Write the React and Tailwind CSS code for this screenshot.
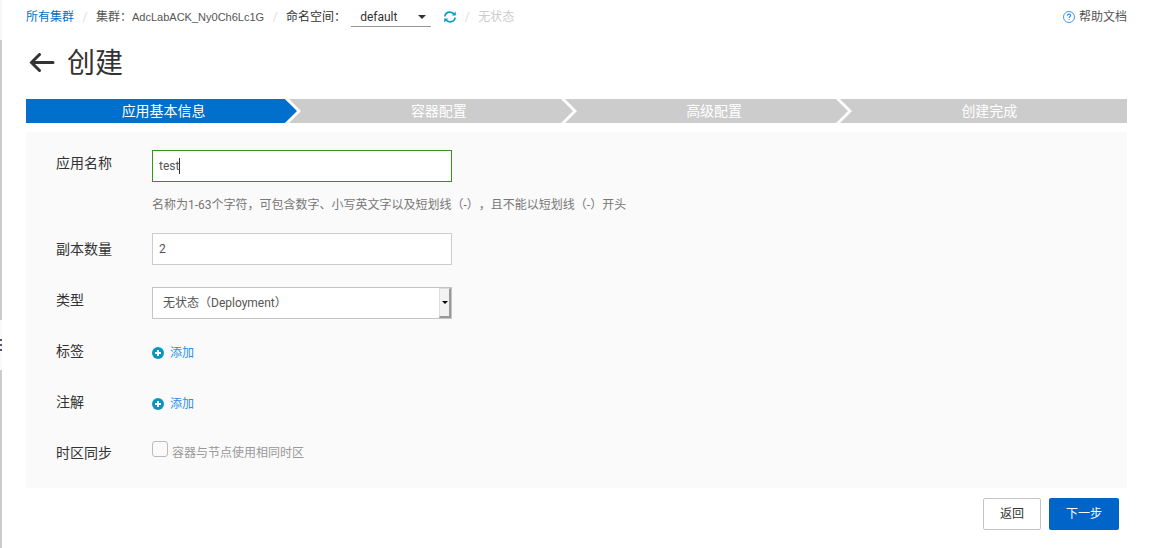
import React, { useState } from "react";

const steps = ["应用基本信息", "容器配置", "高级配置", "创建完成"];

function Slash() {
  return <span className="w-[22px] text-center text-[#dddddd]">/</span>;
}

function ArrowLeft() {
  return (
    <svg className="h-[20px] w-[26px]" viewBox="0 0 26 20" fill="none" stroke="#333333" strokeWidth="3" strokeLinecap="round">
      <path d="M10.500 1.500L2.500 9.500l8 8M2.500 9.500H24" />
    </svg>
  );
}

function RefreshIcon() {
  return (
    <svg className="h-[12px] w-[12px]" viewBox="0 0 12 12" fill="none" stroke="#0a9cc8" strokeWidth="1.700">
      <path d="M.9 5.500C1.200 2.900 3.300 1.200 6 1.200c1.700 0 3.200.8 4.200 2.200M11.100 6.500c-.3 2.600-2.400 4.300-5.100 4.300-1.700 0-3.200-.8-4.200-2.200" />
      <path d="M11.800.6v4h-4zM.2 11.400v-4h4z" fill="#0a9cc8" stroke="none" />
    </svg>
  );
}

function HelpIcon() {
  return (
    <svg className="h-[12px] w-[12px]" viewBox="0 0 12 12" fill="none" stroke="#2b8ee6">
      <circle cx="6" cy="6" r="5.500" strokeWidth="0.900" />
      <path d="M4.300 4.800c0-1 .7-1.700 1.700-1.700s1.700.6 1.700 1.500c0 1.200-1.600 1.200-1.600 2.500M6.100 8.100v1" strokeWidth="1.100" />
    </svg>
  );
}

function AddButton() {
  return (
    <button type="button" className="flex h-[30px] items-center gap-[6px] text-[#2b8fe8]">
      <svg className="h-[12px] w-[12px]" viewBox="0 0 12 12">
        <circle cx="6" cy="6" r="6" fill="#0a94c0" />
        <path d="M6 3v6M3 6h6" stroke="#ffffff" strokeWidth="2" />
      </svg>
      添加
    </button>
  );
}

function Step({ label, active, last }) {
  return (
    <li
      className={`relative h-[24px] flex-1 text-center text-[14px] leading-[24px] text-white ${active ? "bg-[#0070cc]" : "bg-[#cccccc]"}`}
    >
      {label}
      {!last && (
        <svg className="absolute top-0 -right-px h-[24px] w-[17px]" viewBox="0 0 17 24">
          <rect width="17" height="24" fill="#cccccc" />
          {active && <path d="M0 0l13 12L0 24z" fill="#0070cc" />}
          <path d="M0 0h4l12 12L4 24H0l12-12z" fill="#ffffff" />
        </svg>
      )}
    </li>
  );
}

function Row({ id, label, tall, children }) {
  return (
    <div className={`flex items-start ${tall ? "" : "h-[30px]"}`}>
      <label htmlFor={id} className="w-[96px] shrink-0 text-[14px] leading-[26px] text-[#333333]">
        {label}
      </label>
      <div className="min-w-0 flex-1">{children}</div>
    </div>
  );
}

export default function App() {
  const [name, setName] = useState("test");
  const [replicas, setReplicas] = useState("2");

  return (
    <div
      lang="zh-CN"
      className="flex min-h-screen bg-white font-['Roboto','Noto_Sans_CJK_SC',sans-serif] text-[12px] leading-[18px] text-[#555555] [text-spacing-trim:space-all]"
    >
      {/* collapsed side nav */}
      <aside className="flex w-[2px] shrink-0 flex-col bg-[#cccccc]">
        <div className="h-[40px] bg-[#f7f7f7]" />
        <div className="h-[280px]" />
        <div className="flex h-[50px] flex-col justify-center gap-[3px] bg-[#fafafa]">
          <span className="h-[2px] bg-[#555566]" />
          <span className="h-[2px] bg-[#555588]" />
          <span className="h-[2px] bg-[#555566]" />
        </div>
      </aside>

      <main className="min-w-0 flex-1 pr-[22px] pl-[24px]">
        <header className="flex h-[34px] items-center">
          <a href="#" className="text-[#0070cc]">所有集群</a>
          <Slash />
          <span>
            集群：<span className="font-['Liberation_Sans',sans-serif] text-[11px]">AdcLabACK_Ny0Ch6Lc1G</span>
          </span>
          <Slash />
          <label htmlFor="namespace" className="text-[#333333]">命名空间：</label>
          <div className="relative ml-[5px]">
            <select id="namespace" className="h-[20px] w-[80px] appearance-none border-b border-[#999999] pl-[9px] text-[#333333]">
              <option>default</option>
            </select>
            <span className="pointer-events-none absolute top-[8px] right-[5px] border-x-4 border-t-4 border-x-transparent border-t-[#333333]" />
          </div>
          <button type="button" aria-label="刷新" className="ml-[13px]">
            <RefreshIcon />
          </button>
          <Slash />
          <span className="text-[#cccccc]">无状态</span>
          <a href="#" className="ml-auto flex items-center gap-[4px]">
            <HelpIcon />
            帮助文档
          </a>
        </header>

        <div className="flex h-[65px] items-center gap-[12px] pb-[6px] pl-[3px]">
          <a href="#" aria-label="返回" className="pb-[2px]">
            <ArrowLeft />
          </a>
          <h1 className="text-[28px] leading-[40px] text-[#333333]">创建</h1>
        </div>

        <ol className="flex">
          {steps.map((label, i) => (
            <Step key={label} label={label} active={i === 0} last={i === steps.length - 1} />
          ))}
        </ol>

        <form className="mt-[9px]" onSubmit={(e) => e.preventDefault()}>
          <div className="flex flex-col gap-[21px] bg-[#fafafa] px-[30px] py-[18px]">
            <Row id="name" label="应用名称" tall>
              <div className="relative w-[300px]">
                <input
                  id="name"
                  value={name}
                  onChange={(e) => setName(e.target.value)}
                  className="block h-[32px] w-full border border-[#35941a] bg-white px-[6px] caret-transparent outline-none"
                />
                <span className="absolute top-[8px] left-[27px] h-[16px] w-px bg-[#333333]" />
              </div>
              <p className="mt-[16px] leading-[14px] text-[#777777]">
                名称为1-63个字符，可包含数字、小写英文字以及短划线（-），且不能以短划线（-）开头
              </p>
            </Row>

            <div className="flex h-[33px] items-start">
              <label htmlFor="replicas" className="w-[96px] shrink-0 text-[14px] leading-[32px] text-[#333333]">
                副本数量
              </label>
              <input
                id="replicas"
                value={replicas}
                onChange={(e) => setReplicas(e.target.value)}
                className="block h-[32px] w-[300px] border border-[#cccccc] bg-white px-[6px] outline-none"
              />
            </div>

            <Row id="kind" label="类型">
              <div className="relative w-[300px]">
                <select id="kind" className="block h-[32px] w-full appearance-none border border-[#c4c4c4] bg-white pl-[10px]">
                  <option>无状态（Deployment）</option>
                </select>
                <span className="pointer-events-none absolute top-px right-px flex h-[30px] w-[12px] items-center justify-center border-t border-r-2 border-b-2 border-l border-t-[#dddddd] border-r-[#999999] border-b-[#999999] border-l-[#dddddd] bg-[#f2f2f2]">
                  <span className="border-x-3 border-t-3 border-x-transparent border-t-black" />
                </span>
              </div>
            </Row>

            <Row label="标签">
              <AddButton />
            </Row>

            <Row label="注解">
              <AddButton />
            </Row>

            <Row label="时区同步">
              <label htmlFor="timezone" className="flex items-start gap-[4px] text-[#999999]">
                <input
                  id="timezone"
                  type="checkbox"
                  className="mt-px h-[16px] w-[16px] appearance-none rounded-[3px] border border-[#bbbbbb] bg-[#fafafa]"
                />
                <span className="mt-[4px]">容器与节点使用相同时区</span>
              </label>
            </Row>
          </div>

          <div className="flex justify-end gap-[8px] pt-[10px] pr-[8px]">
            <button type="button" className="h-[32px] w-[58px] rounded-[2px] border border-[#c4c4c4] bg-white text-[#333333]">
              返回
            </button>
            <button type="submit" className="h-[32px] w-[70px] rounded-[2px] bg-[#0064c8] text-white">
              下一步
            </button>
          </div>
        </form>
      </main>
    </div>
  );
}
